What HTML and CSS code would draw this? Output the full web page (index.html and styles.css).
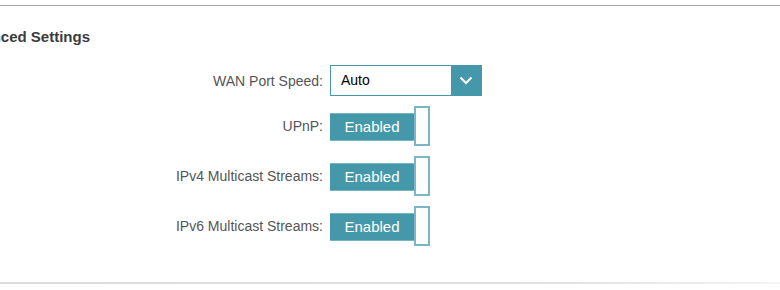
FILE: index.html
```html
<!DOCTYPE html>
<html lang="en">

<head>
    <meta charset="UTF-8">
    <meta name="viewport" content="width=device-width, initial-scale=1.0">
    <title>Advanced Settings</title>
    <link rel="stylesheet" href="styles.css">
</head>

<body>
    <div class="panel">
        <h2 class="panel-title">Advanced Settings</h2>

        <div class="form">
            <label class="form-label" for="wanSpeed">WAN Port Speed:</label>
            <div class="select">
                <span class="select-value" id="wanSpeed">Auto</span>
                <span class="select-arrow">
                    <svg width="14" height="9" viewBox="0 0 14 9">
                        <path d="M1.5 1.5 L7 7 L12.5 1.5" fill="none" stroke="#fff" stroke-width="2"/>
                    </svg>
                </span>
            </div>

            <span class="form-label">UPnP:</span>
            <div class="toggle">
                <span class="toggle-bar">Enabled</span>
                <span class="toggle-knob"></span>
            </div>

            <span class="form-label">IPv4 Multicast Streams:</span>
            <div class="toggle">
                <span class="toggle-bar">Enabled</span>
                <span class="toggle-knob"></span>
            </div>

            <span class="form-label">IPv6 Multicast Streams:</span>
            <div class="toggle">
                <span class="toggle-bar">Enabled</span>
                <span class="toggle-knob"></span>
            </div>
        </div>
    </div>
    <div class="panel-shadow"></div>
</body>

</html>
```

FILE: styles.css
```css
body {
    margin: 0;
    padding-top: 5px;
    font-family: "Liberation Sans", Arial, sans-serif;
    background-color: #fff;
    overflow: hidden;
}

.panel {
    height: 277px;
    border-top: 1px solid #a3a3a3;
    box-sizing: border-box;
}

.panel-title {
    margin: 22px 0 0 -45px;
    font-size: 15px;
    font-weight: bold;
    line-height: 18px;
    color: #3c3c3c;
}

.form {
    display: grid;
    grid-template-columns: 330px auto;
    row-gap: 10px;
    align-items: center;
    margin-top: 19px;
}

.form-label {
    justify-self: end;
    padding-right: 7px;
    font-size: 14px;
    color: #555;
}

/* select box with teal arrow button */
.select {
    display: flex;
    width: 152px;
    height: 31px;
    border: 1px solid #4598aa;
    box-sizing: border-box;
}

.select-value {
    flex: 1;
    padding-left: 10px;
    line-height: 29px;
    font-size: 14px;
    color: #000;
}

.select-arrow {
    display: flex;
    align-items: center;
    justify-content: center;
    width: 30px;
    background-color: #4598aa;
}

/* toggle switch */
.toggle {
    display: flex;
    height: 40px;
}

.toggle-bar {
    width: 84px;
    height: 28px;
    margin-top: 7px;
    box-sizing: border-box;
    border-top: 1px solid #76b6c4;
    border-bottom: 1px solid #76b6c4;
    background-color: #4598aa;
    color: #fff;
    font-size: 15px;
    line-height: 26px;
    text-align: center;
}

.toggle-knob {
    width: 16px;
    height: 40px;
    box-sizing: border-box;
    border: 2px solid #7ab7c6;
    background-color: #fff;
}

.panel-shadow {
    height: 2px;
    background: linear-gradient(to right, #dcdcdc, #e0e0e0 70%, #f4f4f4);
}
```
